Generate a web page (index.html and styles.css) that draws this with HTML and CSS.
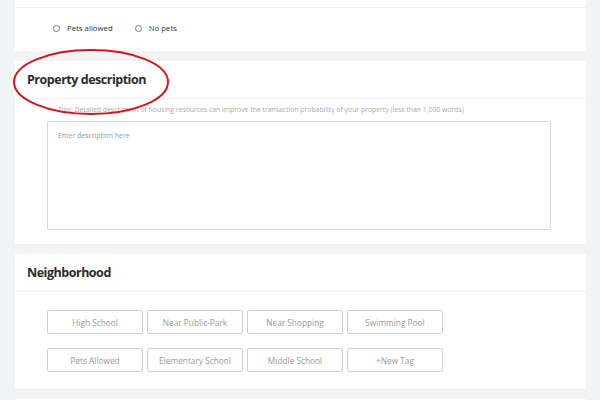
FILE: index.html
```html
<!DOCTYPE html>
<html>
<head>
<meta charset="utf-8">
<link rel="stylesheet" href="styles.css">
</head>
<body>
<div class="page">
  <section class="card card-top">
    <div class="card-tail"></div>
    <div class="radio-row">
      <label class="radio"><span class="dot"></span>Pets allowed</label>
      <label class="radio"><span class="dot"></span>No pets</label>
    </div>
  </section>

  <section class="card">
    <div class="card-head">
      <h2 class="title">Property description</h2>
    </div>
    <div class="desc-body">
      <p class="tips">Tips: Detailed description of housing resources can improve the transaction probability of your property (less than 1,000 words)</p>
      <textarea class="desc" placeholder="Enter description here"></textarea>
    </div>
  </section>

  <section class="card">
    <div class="card-head">
      <h2 class="title">Neighborhood</h2>
    </div>
    <div class="tags">
      <span class="tag">High School</span>
      <span class="tag">Near Public-Park</span>
      <span class="tag">Near Shopping</span>
      <span class="tag">Swimming Pool</span>
      <span class="tag">Pets Allowed</span>
      <span class="tag">Elementary School</span>
      <span class="tag">Middle School</span>
      <span class="tag">+New Tag</span>
    </div>
  </section>

  <section class="card card-next"></section>

  <svg class="mark" width="170" height="72" viewBox="0 0 170 72">
    <ellipse cx="78" cy="33" rx="77" ry="32" fill="none" stroke="#d7141c" stroke-width="2"/>
  </svg>
</div>
</body>
</html>
```

FILE: styles.css
```css
* { box-sizing: border-box; }
html, body { margin: 0; padding: 0; }
body {
  background: #f2f3f5;
  font-family: "Open Sans", "Noto Sans", sans-serif;
  width: 600px;
  height: 400px;
  overflow: hidden;
}
.page {
  position: relative;
  padding: 0 14px 0 15px;
  display: flex;
  flex-direction: column;
  gap: 10px;
}
.card {
  background: #fff;
}
.card-tail {
  height: 8px;
  border-bottom: 1px solid #eeeff1;
}
.radio-row {
  display: flex;
  gap: 22px;
  padding: 14px 0 0 38px;
  height: 43px;
}
.radio {
  display: flex;
  align-items: center;
  gap: 7px;
  height: 12px;
  font-size: 7.8px;
  color: #333;
}
.dot {
  width: 7px;
  height: 7px;
  border: 1px solid #777;
  border-radius: 50%;
}
.card-head {
  height: 38px;
  border-bottom: 1px solid #f0f1f3;
  display: flex;
  align-items: center;
  padding-left: 12px;
}
.title {
  margin: 0;
  font-size: 12.5px;
  font-weight: 700;
  letter-spacing: -0.48px;
  color: #2b2b2b;
}
.desc-body {
  padding: 0 35px 14px 32px;
}
.tips {
  margin: 0;
  padding: 6px 0 0 11px;
  height: 22px;
  font-size: 6.85px;
  color: #aaa;
  white-space: nowrap;
}
.desc {
  display: block;
  width: 504px;
  height: 109px;
  border: 1px solid #d9d9d9;
  border-radius: 1px;
  resize: none;
  padding: 9px 10px;
  font-family: inherit;
  font-size: 6.9px;
  outline: none;
}
.desc::placeholder { color: #999; }
.tags {
  display: grid;
  grid-template-columns: repeat(4, 96px);
  column-gap: 4px;
  row-gap: 14px;
  padding: 18px 0 17px 32px;
}
.tag {
  height: 24px;
  border: 1px solid #cfcfcf;
  border-radius: 2px;
  display: flex;
  align-items: center;
  justify-content: center;
  font-size: 8.3px;
  color: #999;
}
.card-next { height: 20px; }
.mark {
  position: absolute;
  left: 13px;
  top: 49px;
}
```
